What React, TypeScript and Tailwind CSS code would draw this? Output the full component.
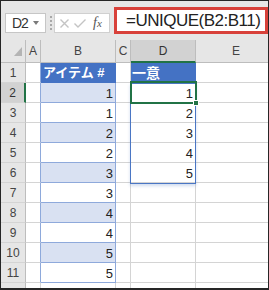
const cols = ["A", "B", "C", "D", "E"];
const rows = [1, 2, 3, 4, 5, 6, 7, 8, 9, 10, 11, 12];
const bVals: Record<number, number> = { 2: 1, 3: 1, 4: 2, 5: 2, 6: 3, 7: 3, 8: 4, 9: 4, 10: 5, 11: 5 };
const dVals: Record<number, number> = { 2: 1, 3: 2, 4: 3, 5: 4, 6: 5 };

const font = { fontFamily: "'Liberation Sans', 'Noto Sans CJK JP', sans-serif" };

function FormulaBar() {
  return (
    <div className="flex h-[39px] items-start">
      <div className="ml-[4px] mt-[12px] flex h-[20px] w-[41px] items-center border border-[#c6c6c6] bg-white">
        <span className="pl-[6px] text-[14px] leading-none tracking-[-1px] text-[#333]">D2</span>
        <svg className="ml-[5px]" width="6" height="4" viewBox="0 0 6 4">
          <path d="M0 0 L6 0 L3 4 Z" fill="#7a7a7a" />
        </svg>
      </div>
      <div className="ml-[4px] mt-[15px] h-[14px] w-0 border-l-2 border-dotted border-[#a8a8a8]" />
      <div className="ml-[2px] mt-[12px] flex h-[20px] w-[56px] items-center border border-[#d0d0d0] bg-white">
        <svg className="ml-[5px]" width="9" height="9" viewBox="0 0 9 9">
          <path d="M0.5 0.5 L8.5 8.5 M8.5 0.5 L0.5 8.5" stroke="#c4c4c4" strokeWidth="1.4" />
        </svg>
        <svg className="ml-[5px]" width="12" height="9" viewBox="0 0 12 9">
          <path d="M0.5 4.5 L4 8 L11.5 0.5" stroke="#c4c4c4" strokeWidth="1.4" fill="none" />
        </svg>
        <span
          className="ml-[7px] text-[14px] italic leading-none text-[#555]"
          style={{ fontFamily: "'Liberation Serif', serif" }}
        >
          f<span className="text-[11px]">x</span>
        </span>
      </div>
      <div className="ml-[4px] mt-[6px] flex h-[27px] flex-1 items-center border-[3px] border-[#d8413a] bg-white">
        <span className="pl-[9px] text-[17px] leading-none tracking-[-0.5px] text-[#222]">=UNIQUE(B2:B11)</span>
      </div>
    </div>
  );
}

function Grid() {
  return (
    <div className="relative grid grid-cols-[25px_15px_75px_15px_65px_81px] grid-rows-[23px_repeat(12,20px)]">
      <div className="flex items-end justify-end border-b border-r border-[#bdbdbd] bg-[#e6e6e6] pb-[6px] pr-[3px]">
        <svg width="8" height="9" viewBox="0 0 8 9">
          <path d="M8 0 L8 9 L0 9 Z" fill="#b4b4b4" />
        </svg>
      </div>
      {cols.map((c) => (
        <div
          key={c}
          className={
            c === "D"
              ? "flex items-center justify-center border-b-2 border-r border-b-[#217346] border-r-[#bdbdbd] bg-[#d2d2d2] text-[12px] text-[#333]"
              : "flex items-center justify-center border-b border-r border-[#bdbdbd] bg-[#e6e6e6] text-[12px] text-[#444]"
          }
        >
          {c}
        </div>
      ))}
      {rows.map((r) => {
        const band = r % 2 === 0 && r <= 11;
        return [
          <div
            key={`h${r}`}
            className={
              r === 2
                ? "flex items-end justify-center border-b border-r-2 border-b-[#d4d4d4] border-r-[#217346] bg-[#d2d2d2] pb-[3px] text-[12px] leading-none text-[#333]"
                : "flex items-end justify-center border-b border-r border-b-[#d4d4d4] border-r-[#bdbdbd] bg-[#e6e6e6] pb-[3px] text-[12px] leading-none text-[#444]"
            }
          >
            {r <= 11 ? r : ""}
          </div>,
          <div
            key={`a${r}`}
            className={
              r <= 11
                ? "border-b border-r border-b-[#d4d4d4] border-r-[#8ea9db] bg-white"
                : "border-b border-r border-[#d4d4d4] bg-white"
            }
          />,
          r === 1 ? (
            <div
              key={`b${r}`}
              className="flex items-center border-b border-r border-[#4472c4] bg-[#4472c4] pl-[2px] text-[13px] font-bold leading-none text-white"
            >
              アイテム #
            </div>
          ) : r <= 11 ? (
            <div
              key={`b${r}`}
              className={`flex items-end justify-end border-b border-r border-[#8ea9db] pb-[2px] pr-[2px] text-[13px] leading-none text-[#222] ${band ? "bg-[#d9e1f2]" : "bg-white"}`}
            >
              {bVals[r]}
            </div>
          ) : (
            <div key={`b${r}`} className="border-b border-r border-[#d4d4d4] bg-white" />
          ),
          <div key={`c${r}`} className="border-b border-r border-[#d4d4d4] bg-white" />,
          r === 1 ? (
            <div
              key={`d${r}`}
              className="flex items-center border-b border-r border-[#4472c4] bg-[#4472c4] pl-[1px] text-[14px] font-bold leading-none text-white"
            >
              一意
            </div>
          ) : (
            <div
              key={`d${r}`}
              className="flex items-end justify-end border-b border-r border-[#d4d4d4] bg-white pb-[2px] pr-[2px] text-[13px] leading-none text-[#222]"
            >
              {dVals[r] ?? ""}
            </div>
          ),
          <div key={`e${r}`} className="border-b border-r border-[#d4d4d4] bg-white" />,
        ];
      })}
      {/* spill range */}
      <div className="pointer-events-none absolute left-[129px] top-[43px] h-[101px] w-[66px] border border-[#4a76c4] shadow-[0_2px_3px_rgba(74,118,196,0.25)]" />
      {/* active cell */}
      <div className="pointer-events-none absolute left-[129px] top-[41px] h-[23px] w-[67px] border-2 border-[#217346]" />
      <div className="pointer-events-none absolute left-[192px] top-[60px] h-[6px] w-[6px] border border-white bg-[#217346]" />
    </div>
  );
}

export default function App() {
  return (
    <div
      className="h-[290px] w-[269px] overflow-hidden border-x border-b-2 border-t border-[#262626] bg-[#e6e6e6]"
      style={font}
    >
      <FormulaBar />
      <Grid />
    </div>
  );
}
